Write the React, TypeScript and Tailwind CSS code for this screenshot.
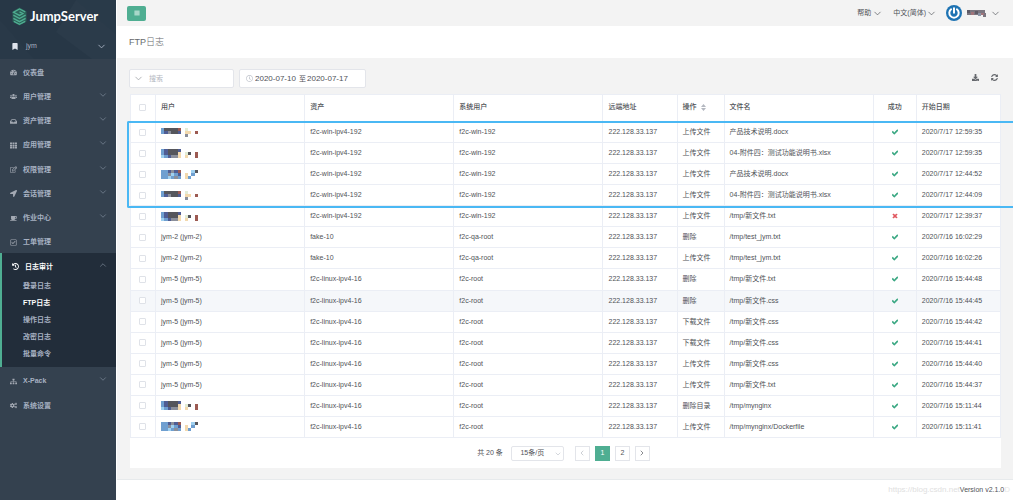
import React from "react";
import {
  FaBars,
  FaBookmark,
  FaCheck,
  FaCoffee,
  FaCogs,
  FaDownload,
  FaHistory,
  FaInbox,
  FaLocationArrow,
  FaRegCheckSquare,
  FaRegClock,
  FaRegEdit,
  FaSitemap,
  FaSyncAlt,
  FaTachometerAlt,
  FaTh,
  FaTimes,
  FaUsers,
} from "react-icons/fa";
import { ChevronDown, ChevronLeft, ChevronRight, ChevronUp } from "lucide-react";

type MenuItem = {
  label: string;
  icon: React.ReactNode;
  more?: boolean;
};

const menu: MenuItem[] = [
  { label: "仪表盘", icon: <FaTachometerAlt /> },
  { label: "用户管理", icon: <FaUsers />, more: true },
  { label: "资产管理", icon: <FaInbox />, more: true },
  { label: "应用管理", icon: <FaTh />, more: true },
  { label: "权限管理", icon: <FaRegEdit />, more: true },
  { label: "会话管理", icon: <FaLocationArrow />, more: true },
  { label: "作业中心", icon: <FaCoffee />, more: true },
  { label: "工单管理", icon: <FaRegCheckSquare /> },
];

const bottomMenu: MenuItem[] = [
  { label: "X-Pack", icon: <FaSitemap />, more: true },
  { label: "系统设置", icon: <FaCogs /> },
];

const auditMenu = ["登录日志", "FTP日志", "操作日志", "改密日志", "批量命令"];

type Log = {
  user: string;
  mask?: number;
  asset: string;
  sysUser: string;
  action: string;
  file: string;
  failed?: boolean;
  date: string;
};

const win = { user: "", asset: "f2c-win-ipv4-192", sysUser: "f2c-win-192", action: "上传文件" };
const qa = { user: "jym-2 (jym-2)", asset: "fake-10", sysUser: "f2c-qa-root", file: "/tmp/test_jym.txt" };
const linux = { user: "jym-5 (jym-5)", asset: "f2c-linux-ipv4-16", sysUser: "f2c-root" };

const logs: Log[] = [
  { ...win, mask: 0, file: "产品技术说明.docx", date: "2020/7/17 12:59:35" },
  { ...win, mask: 1, file: "04-附件四：测试功能说明书.xlsx", date: "2020/7/17 12:59:35" },
  { ...win, mask: 2, file: "产品技术说明.docx", date: "2020/7/17 12:44:52" },
  { ...win, mask: 0, file: "04-附件四：测试功能说明书.xlsx", date: "2020/7/17 12:44:09" },
  { ...win, mask: 1, file: "/tmp/新文件.txt", failed: true, date: "2020/7/17 12:39:37" },
  { ...qa, action: "删除", date: "2020/7/16 16:02:29" },
  { ...qa, action: "上传文件", date: "2020/7/16 16:02:26" },
  { ...linux, action: "删除", file: "/tmp/新文件.txt", date: "2020/7/16 15:44:48" },
  { ...linux, action: "删除", file: "/tmp/新文件.css", date: "2020/7/16 15:44:45" },
  { ...linux, action: "下载文件", file: "/tmp/新文件.css", date: "2020/7/16 15:44:42" },
  { ...linux, action: "下载文件", file: "/tmp/新文件.css", date: "2020/7/16 15:44:41" },
  { ...linux, action: "上传文件", file: "/tmp/新文件.css", date: "2020/7/16 15:44:40" },
  { ...linux, action: "上传文件", file: "/tmp/新文件.txt", date: "2020/7/16 15:44:37" },
  { ...linux, mask: 1, action: "删除目录", file: "/tmp/mynginx", date: "2020/7/16 15:11:44" },
  { ...linux, mask: 2, action: "上传文件", file: "/tmp/mynginx/Dockerfile", date: "2020/7/16 15:11:41" },
];

const colors: Record<string, string> = {
  b: "#6f9fd0",
  n: "#4f5d94",
  g: "#55565c",
  l: "#8b8f9b",
  r: "#9c5a52",
  y: "#f3d9ae",
  c: "#9fd0f0",
  e: "#e3ecd6",
};

// one letter per block, dots are empty
const masks = [
  ["bggggr.e...", "bnlggn.yy.r", ".......l..."],
  ["bngggn.....", "bngggy.eg.r", "cbnlly.y..r"],
  ["bbnlnr...cg", "bblcbn.y.b.", "bbcblb.yb.."],
];

const Mosaic = ({ pattern }: { pattern: string[] }) => (
  <svg
    width="37"
    height="9"
    viewBox="0 0 33 9"
    preserveAspectRatio="none"
    shapeRendering="crispEdges"
    aria-hidden="true"
  >
    {pattern.map((line, y) =>
      line.split("").map((c, x) =>
        colors[c] ? <rect key={`${x}-${y}`} x={x * 3} y={y * 3} width="3" height="3" fill={colors[c]} /> : null
      )
    )}
  </svg>
);

const Logo = () => (
  <svg width="15" height="19" viewBox="0 0 15 19" fill="none" aria-hidden="true">
    <path d="M7.5 .5 14.5 4.5v10l-7 4-7-4v-10z" fill="#2b5f57" />
    <path d="M13.2 4.8 7.5 2 1.6 5.2 7.5 8.4l3.4-1.8L7.5 4.9" stroke="#4fae92" strokeWidth="1.3" />
    <path d="M1.4 8.2 7.5 11.5l6.1-3.3M1.4 11.3l6.1 3.3 6.1-3.3M1.8 14.3l5.7 3 5.7-3" stroke="#4fae92" strokeWidth="1.4" />
  </svg>
);

const Avatar = () => (
  <svg width="16" height="16" viewBox="0 0 16 16" fill="none" aria-hidden="true">
    <circle cx="8" cy="8" r="8" fill="#1e73b3" />
    <path d="M8 3.2v4.6M5.1 4.3a4.7 4.7 0 1 0 5.8 0" stroke="#fff" strokeWidth="2" strokeLinecap="round" />
  </svg>
);

const SidebarItem = ({ label, icon, more }: MenuItem) => (
  <li className="flex flex-1">
    <a href="#" className="flex flex-1 items-center pr-2 pl-[10px] font-bold text-[#a7b1c2]">
      <span className="flex w-[13px] text-[7px] text-[#a3a9b3]">{icon}</span>
      {label}
      {more && <ChevronDown strokeWidth={1.5} className="mb-1 ml-auto h-[10px] w-[10px] text-[#8793a3]" />}
    </a>
  </li>
);

const Sidebar = () => (
  <aside className="flex w-[116px] shrink-0 flex-col bg-[#34414f]">
    <div className="relative h-[59px] overflow-hidden bg-[#273746]">
      <svg className="absolute inset-0 h-full w-full" viewBox="0 0 116 59" preserveAspectRatio="none" aria-hidden="true">
        <path d="M56 32 76 0h40v59H92z" fill="#2b3b4a" />
        <path d="M0 20 34 59H0z" fill="#293948" />
        <path d="M76 0l40 34V0z" fill="#293a49" />
      </svg>
      <a href="#" className="relative flex h-8 items-center gap-[3px] pl-3 text-white">
        <Logo />
        <span className="font-['Lato'] text-[13px] font-bold">JumpServer</span>
      </a>
      <button className="relative flex h-7 w-full items-center pr-[9px] pl-3 text-[#a7b1c2]">
        <FaBookmark className="mr-2 h-[7px] w-[6px] text-[#dfe4ed]" />
        jym
        <ChevronDown strokeWidth={2} className="ml-auto h-[11px] w-[11px]" />
      </button>
    </div>

    <ul className="flex h-[194px] flex-col [&_a]:pt-[3px]">
      {menu.map((item) => (
        <SidebarItem key={item.label} {...item} />
      ))}
    </ul>

    <div className="border-l-2 border-[#4fae92] bg-[#222d3a] pb-[5px] font-bold">
      <a href="#" className="flex h-6 items-center pt-[3px] pr-2 pl-[10px] text-white">
        <span className="flex w-[13px] text-[7px]">
          <FaHistory />
        </span>
        日志审计
        <ChevronUp strokeWidth={1.5} className="mb-1 ml-auto h-[10px] w-[10px] text-[#8793a3]" />
      </a>
      <ul>
        {auditMenu.map((label) => (
          <li key={label}>
            <a
              href="#"
              className={`flex h-[17px] items-center pl-[21px] ${label === "FTP日志" ? "text-white" : "text-[#a7b1c2]"}`}
            >
              {label}
            </a>
          </li>
        ))}
      </ul>
    </div>

    <ul className="mt-[2px] flex h-[49px] flex-col">
      {bottomMenu.map((item) => (
        <SidebarItem key={item.label} {...item} />
      ))}
    </ul>
  </aside>
);

const TopBar = () => (
  <header className="flex h-[26px] items-center pr-3 pl-[10px]">
    <button
      aria-label="菜单"
      className="flex h-[15px] w-[19px] items-center justify-center rounded-[2px] bg-[#4fae92] text-white"
    >
      <FaBars className="h-[6px] w-[6px]" />
    </button>
    <button className="ml-auto flex items-center gap-px">
      帮助 <ChevronDown strokeWidth={1.5} className="h-[11px] w-[11px]" />
    </button>
    <button className="ml-[10px] flex items-center">
      中文(简体) <ChevronDown strokeWidth={1.5} className="h-[11px] w-[11px]" />
    </button>
    <button aria-label="账号" className="ml-[9px] flex items-center gap-1">
      <Avatar />
      <svg width="20" height="7" viewBox="0 0 20 7" shapeRendering="crispEdges" aria-hidden="true">
        <path d="M1 0h18v3h1v4h-3V5H1z" fill="#7b7680" />
        <path d="M1 0h3v3H1zM9 1h3v3H9z" fill="#5e5a65" />
        <path d="M5 2h3v3H5zM15 3h3v2h-3z" fill="#a0747a" />
        <path d="M12 3h3v3h-3z" fill="#8b96a8" />
      </svg>
      <ChevronDown strokeWidth={1.5} className="h-[11px] w-[11px]" />
    </button>
  </header>
);

const Toolbar = () => (
  <div className="mb-[6px] flex h-[19px] items-stretch gap-[5px]">
    <div className="flex w-[105px] items-center rounded-[2px] border border-[#e3e5ea] bg-white pl-[3px]">
      <ChevronDown strokeWidth={1.5} className="h-[11px] w-[11px] shrink-0 text-[#909399]" />
      <input
        aria-label="搜索"
        placeholder="搜索"
        className="ml-[5px] w-full min-w-0 outline-none placeholder:text-[#b4b8bf]"
      />
    </div>
    <div className="flex w-[127px] items-center rounded-[2px] border border-[#e3e5ea] bg-white pl-[6px]">
      <FaRegClock className="mr-[2px] h-[7px] w-[7px] shrink-0 text-[#c0c4cc]" />
      <input aria-label="开始日期" defaultValue="2020-07-10" className="w-[44px] text-[8px] outline-none" />
      <span>至</span>
      <input aria-label="结束日期" defaultValue="2020-07-17" className="ml-px w-[44px] text-[8px] outline-none" />
    </div>
    <div className="ml-auto flex items-center gap-3 pr-[3px] pb-[2px] text-[#65686d]">
      <button aria-label="导出">
        <FaDownload className="h-[7px] w-[7px]" />
      </button>
      <button aria-label="刷新">
        <FaSyncAlt className="h-[7px] w-[7px]" />
      </button>
    </div>
  </div>
);

const CheckBox = ({ label }: { label: string }) => (
  <input
    type="checkbox"
    aria-label={label}
    className="block h-[7px] w-[7px] appearance-none rounded-[1px] border border-[#dfe2e8] bg-white"
  />
);

const cell = "border-r border-b border-[#ebeef5] px-[5px] py-0";

const LogTable = () => (
  <div className="relative">
    <table className="h-[344px] w-full table-fixed border-separate border-spacing-0 border-t border-l border-[#ebeef5] text-left">
      <colgroup>
        <col className="w-[25px]" />
        <col className="w-[149px]" />
        <col className="w-[149px]" />
        <col className="w-[149px]" />
        <col className="w-[74px]" />
        <col className="w-[47px]" />
        <col className="w-[149px]" />
        <col className="w-[43px]" />
        <col className="w-[84px]" />
      </colgroup>
      <thead>
        <tr className="h-[27px] [&>th]:pb-[2px] [&>th]:font-medium">
          <th className={`${cell} pl-2`}>
            <CheckBox label="全选" />
          </th>
          <th className={cell}>用户</th>
          <th className={cell}>资产</th>
          <th className={cell}>系统用户</th>
          <th className={cell}>远端地址</th>
          <th className={cell}>
            <button className="flex items-center gap-1">
              操作
              <svg width="5" height="7" viewBox="0 0 5 7" fill="#b4b8c0" aria-hidden="true">
                <path d="M2.5 0 5 3H0zM2.5 7 0 4h5z" />
              </svg>
            </button>
          </th>
          <th className={cell}>文件名</th>
          <th className={`${cell} text-center`}>成功</th>
          <th className={cell}>开始日期</th>
        </tr>
      </thead>
      <tbody>
        {logs.map((log, i) => (
          <tr key={i} className={i === 8 ? "bg-[#f5f7fa]" : "bg-white"}>
            <td className={`${cell} pl-2`}>
              <CheckBox label={`选择第${i + 1}行`} />
            </td>
            <td className={cell}>{log.mask === undefined ? log.user : <Mosaic pattern={masks[log.mask]} />}</td>
            <td className={cell}>{log.asset}</td>
            <td className={cell}>{log.sysUser}</td>
            <td className={cell}>222.128.33.137</td>
            <td className={cell}>{log.action}</td>
            <td className={`${cell} whitespace-nowrap`}>{log.file}</td>
            <td className={cell}>
              {log.failed ? (
                <FaTimes stroke="currentColor" strokeWidth={50} className="mx-auto h-[6px] w-[6px] text-[#e0525b]" />
              ) : (
                <FaCheck stroke="currentColor" strokeWidth={50} className="mx-auto h-[6px] w-[6px] text-[#35a67f]" />
              )}
            </td>
            <td className={`${cell} whitespace-nowrap`}>{log.date}</td>
          </tr>
        ))}
      </tbody>
    </table>
    {/* highlight over the first four rows */}
    <div className="pointer-events-none absolute top-[27px] -right-[12px] -left-[3px] h-[87px] rounded-l-[2px] border-2 border-r-0 border-[#4ab8f4]" />
  </div>
);

const pageButton = "flex h-[15px] w-[15px] items-center justify-center border";

const Pagination = () => (
  <div className="flex h-[30px] items-center justify-center pr-1">
    <span>共 20 条</span>
    <div className="relative mr-[11px] ml-2">
      <select
        aria-label="每页条数"
        className="h-[15px] w-[53px] appearance-none rounded-[2px] border border-[#e3e5ea] bg-white pr-[10px] text-center"
      >
        <option>15条/页</option>
      </select>
      <ChevronDown className="pointer-events-none absolute top-1 right-[2px] h-2 w-2 text-[#c0c4cc]" />
    </div>
    <div className="flex gap-[5px]">
      <button aria-label="上一页" disabled className={`${pageButton} border-[#e3e5ea] text-[#b4b8bf]`}>
        <ChevronLeft className="h-2 w-2" />
      </button>
      <button className={`${pageButton} border-[#4fae92] bg-[#4fae92] text-white`}>1</button>
      <button className={`${pageButton} border-[#e3e5ea]`}>2</button>
      <button aria-label="下一页" className={`${pageButton} border-[#e3e5ea]`}>
        <ChevronRight className="h-2 w-2" />
      </button>
    </div>
  </div>
);

const App = () => {
  return (
    <div className="flex min-h-screen bg-[#f3f3f3] font-['Liberation_Sans','Noto_Sans_CJK_SC',sans-serif] text-[7px] leading-[10px] text-[#4f5257]">
      <Sidebar />
      <div className="flex min-w-0 flex-1 flex-col border-l border-white">
        <TopBar />
        <div className="flex h-8 items-center bg-white pl-3">
          <h1 className="text-[9px] font-light text-[#676a6c]">FTP日志</h1>
        </div>
        <main className="flex-1 pt-[11px] pr-3 pl-3">
          <Toolbar />
          <div className="ml-px bg-white">
            <LogTable />
            <Pagination />
          </div>
        </main>
        <footer className="flex h-[21px] items-center justify-end border-t border-[#e7eaec] bg-white pr-[3px]">
          <span className="text-[8px] text-[#e0e0e0]">https://blog.csdn.net</span>
          <span>
            Version <span className="font-medium">v2.1.0</span>
          </span>
          <span className="text-[8px] text-[#e8e8e8]">D</span>
        </footer>
      </div>
    </div>
  );
};

export default App;
